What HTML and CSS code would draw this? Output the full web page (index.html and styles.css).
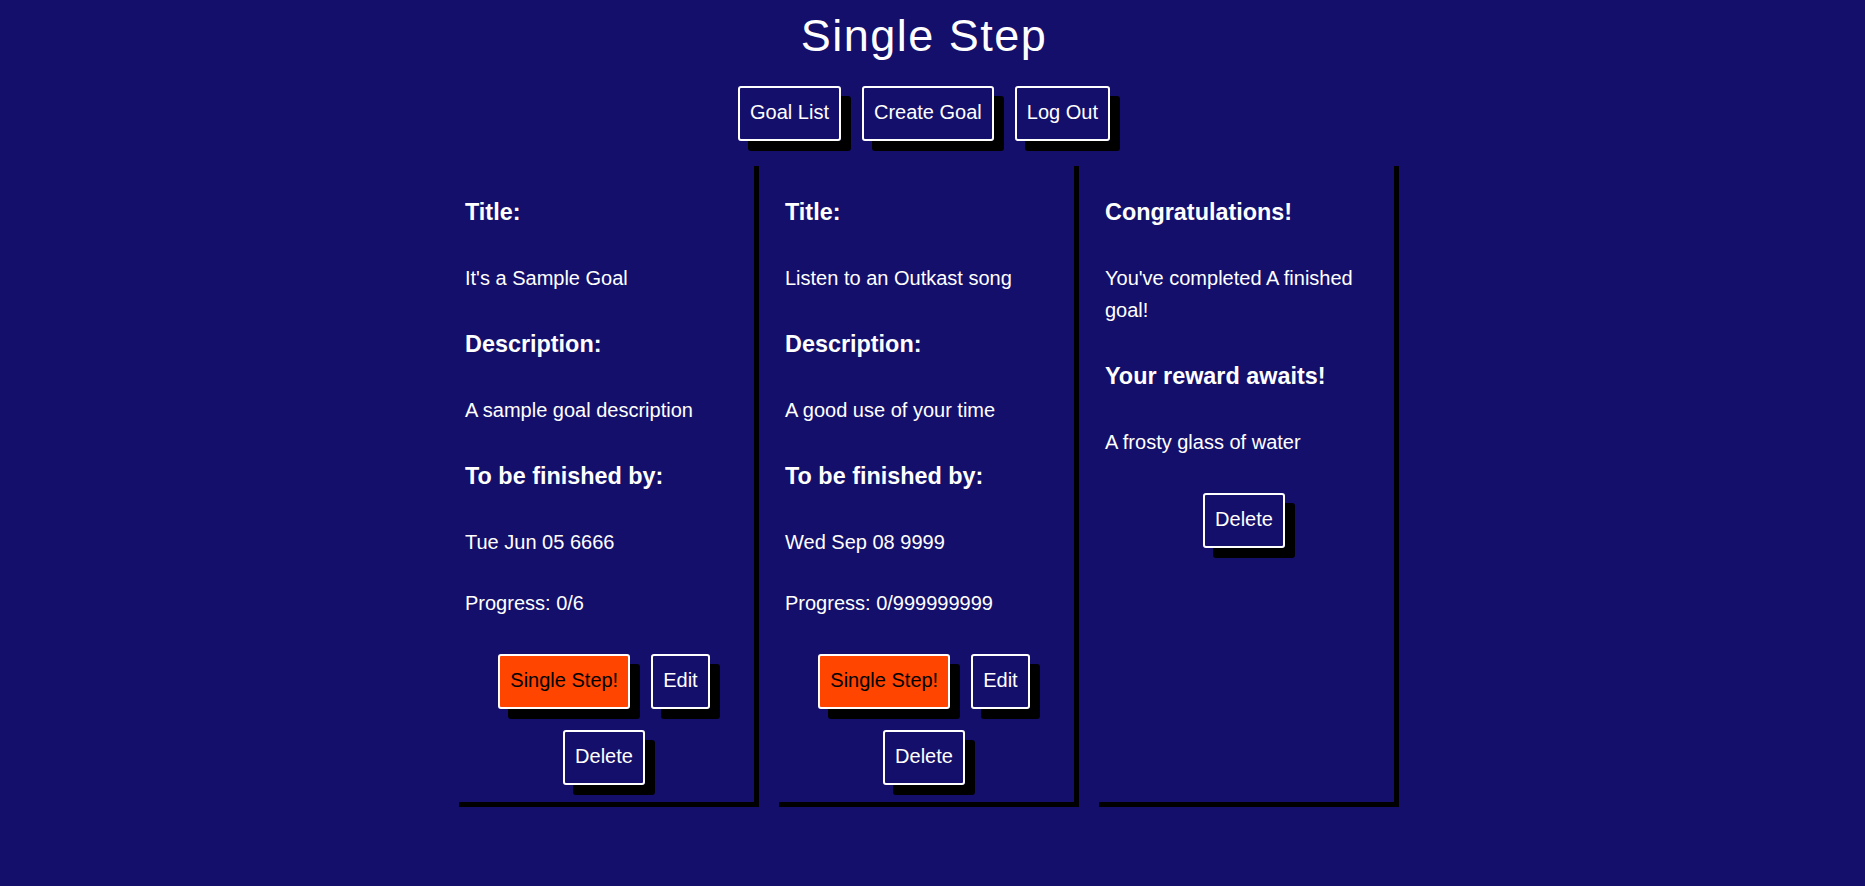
FILE: index.html
```html
<!DOCTYPE html>
<html lang="en">
<head>
<meta charset="utf-8">
<title>Single Step</title>
<link rel="stylesheet" href="styles.css">
</head>
<body>
<header class="header">
  <h1 class="title">Single Step</h1>
  <nav class="nav">
    <button class="btn">Goal List</button>
    <button class="btn">Create Goal</button>
    <button class="btn">Log Out</button>
  </nav>
</header>
<main class="cards">
  <section class="card">
    <h3 class="label">Title:</h3>
    <p class="value">It's a Sample Goal</p>
    <h3 class="label">Description:</h3>
    <p class="value">A sample goal description</p>
    <h3 class="label">To be finished by:</h3>
    <p class="value">Tue Jun 05 6666</p>
    <p class="value">Progress: 0/6</p>
    <div class="actions">
      <button class="btn btn-step">Single Step!</button>
      <button class="btn">Edit</button>
      <button class="btn">Delete</button>
    </div>
  </section>
  <section class="card">
    <h3 class="label">Title:</h3>
    <p class="value">Listen to an Outkast song</p>
    <h3 class="label">Description:</h3>
    <p class="value">A good use of your time</p>
    <h3 class="label">To be finished by:</h3>
    <p class="value">Wed Sep 08 9999</p>
    <p class="value">Progress: 0/999999999</p>
    <div class="actions">
      <button class="btn btn-step">Single Step!</button>
      <button class="btn">Edit</button>
      <button class="btn">Delete</button>
    </div>
  </section>
  <section class="card">
    <h3 class="label">Congratulations!</h3>
    <p class="value">You've completed A finished goal!</p>
    <h3 class="label">Your reward awaits!</h3>
    <p class="value">A frosty glass of water</p>
    <div class="actions">
      <button class="btn">Delete</button>
    </div>
  </section>
</main>
</body>
</html>
```

FILE: styles.css
```css
html, body {
  margin: 0;
  padding: 0;
}

body {
  background: #140f6b;
  color: #ffffff;
  font-family: "Liberation Sans", Arial, sans-serif;
  font-size: 20px;
  line-height: 1.6;
}

.header {
  display: flex;
  flex-direction: column;
  align-items: center;
  padding-right: 17px;
}

.title {
  margin: 10px 0 0;
  font-size: 45px;
  font-weight: 400;
  line-height: 52px;
  letter-spacing: 1.5px;
}

.nav {
  display: flex;
  gap: 21px;
  margin-top: 24px;
}

.btn {
  font-family: inherit;
  font-size: 20px;
  line-height: 31px;
  padding: 9px 10px 11px;
  border: 2px solid #ffffff;
  border-radius: 3px;
  background: transparent;
  color: #ffffff;
  box-shadow: 10px 10px 0 #000000;
  cursor: pointer;
}

.btn-step {
  background: #ff4500;
  color: #000000;
}

.cards {
  display: flex;
  justify-content: center;
  gap: 20px;
  margin-top: 25px;
  padding-right: 7px;
}

.card {
  box-sizing: border-box;
  width: 300px;
  display: flex;
  flex-direction: column;
  padding: 25px 11px 17px 6px;
  border-right: 5px solid #000000;
  border-bottom: 5px solid #000000;
}

.label {
  margin: 3px 0 30.5px;
  font-size: 23.4px;
  font-weight: 700;
  line-height: 1.6;
}

.value {
  margin: 0 0 29px;
}

.actions {
  display: flex;
  flex-wrap: wrap;
  justify-content: center;
  gap: 21px;
  margin-top: 6px;
}
```
